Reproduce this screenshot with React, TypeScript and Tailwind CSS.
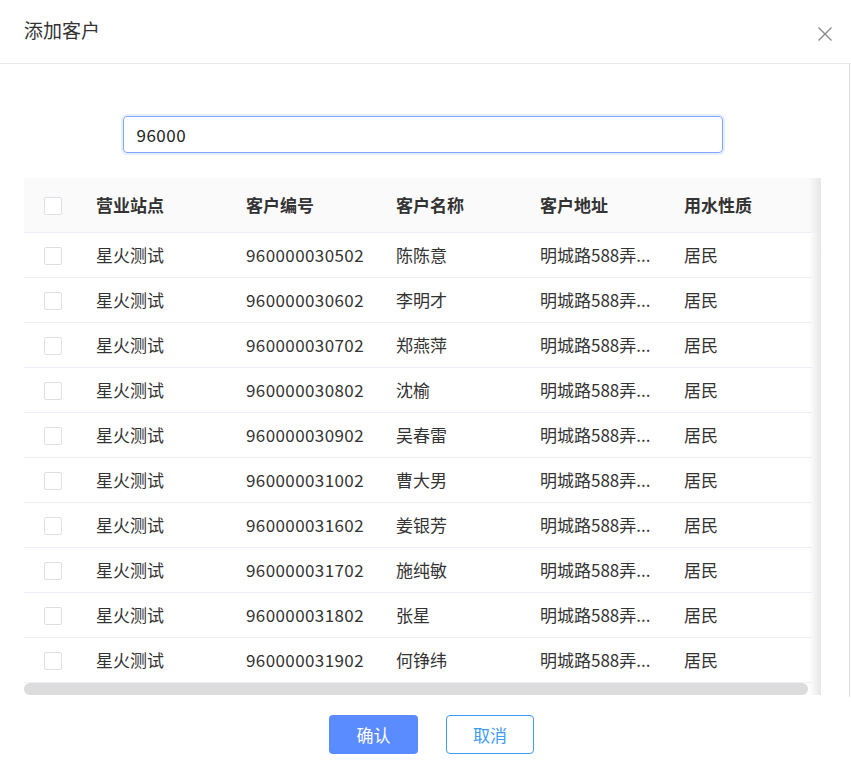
import React from 'react';

interface Customer {
    site: string;
    code: string;
    name: string;
    address: string;
    waterType: string;
}

const customers: Customer[] = [
    { site: '星火测试', code: '960000030502', name: '陈陈意', address: '明城路588弄...', waterType: '居民' },
    { site: '星火测试', code: '960000030602', name: '李明才', address: '明城路588弄...', waterType: '居民' },
    { site: '星火测试', code: '960000030702', name: '郑燕萍', address: '明城路588弄...', waterType: '居民' },
    { site: '星火测试', code: '960000030802', name: '沈榆', address: '明城路588弄...', waterType: '居民' },
    { site: '星火测试', code: '960000030902', name: '吴春雷', address: '明城路588弄...', waterType: '居民' },
    { site: '星火测试', code: '960000031002', name: '曹大男', address: '明城路588弄...', waterType: '居民' },
    { site: '星火测试', code: '960000031602', name: '姜银芳', address: '明城路588弄...', waterType: '居民' },
    { site: '星火测试', code: '960000031702', name: '施纯敏', address: '明城路588弄...', waterType: '居民' },
    { site: '星火测试', code: '960000031802', name: '张星', address: '明城路588弄...', waterType: '居民' },
    { site: '星火测试', code: '960000031902', name: '何铮纬', address: '明城路588弄...', waterType: '居民' },
];

const Checkbox = () => (
    <span className="block w-[18px] h-[18px] rounded-[2px] border border-[#dcdfe6] bg-white" />
);

const cols = 'grid grid-cols-[72px_150px_150px_144px_144px_1fr] items-center';

const App: React.FC = () => {
    return (
        <div
            className="w-[851px] h-[764px] bg-white text-[#333] overflow-hidden"
            style={{ fontFamily: '"Noto Sans CJK SC", "Noto Sans", sans-serif' }}
        >
            {/* header */}
            <div className="h-[64px] border-b border-[#ebebeb] flex items-center justify-between pl-[24px] pr-[18px]">
                <span className="text-[19px] text-[#333] -mt-[2px]">添加客户</span>
                <button className="text-[#888] mt-[4px]">
                    <svg width="16" height="16" viewBox="0 0 16 16" fill="none" stroke="currentColor" strokeWidth="1.3">
                        <path d="M1.5 1.5 L14.5 14.5 M14.5 1.5 L1.5 14.5" />
                    </svg>
                </button>
            </div>

            {/* body */}
            <div className="w-[850px] h-[633px] border-r border-[#dcdcdc] pt-[52px]">
                <div className="flex justify-center pr-[4px]">
                    <input
                        defaultValue="96000"
                        className="w-[600px] h-[37px] rounded-[4px] border border-[#82a6ff] px-[13px] text-[17px] tracking-[0.5px] text-[#222] outline-none shadow-[0_0_0_2px_rgba(120,160,255,0.18)]"
                    />
                </div>

                {/* table */}
                <div className="relative ml-[24px] mt-[25px] w-[797px]">
                    <div className="w-[788px]">
                        <div className={`${cols} h-[55px] bg-[#fafafa] border-b border-[#ebeef5] text-[17px] font-bold text-[#333]`}>
                            <div className="pl-[20px] pt-[1px]"><Checkbox /></div>
                            <div>营业站点</div>
                            <div>客户编号</div>
                            <div>客户名称</div>
                            <div>客户地址</div>
                            <div>用水性质</div>
                        </div>
                        {customers.map((c) => (
                            <div key={c.code} className={`${cols} h-[45px] border-b border-[#ebeef5] text-[17px] text-[#333]`}>
                                <div className="pl-[20px] pt-[1px]"><Checkbox /></div>
                                <div>{c.site}</div>
                                <div className="tracking-[0.4px]">{c.code}</div>
                                <div>{c.name}</div>
                                <div>{c.address}</div>
                                <div>{c.waterType}</div>
                            </div>
                        ))}
                    </div>
                    {/* horizontal scrollbar */}
                    <div className="h-[12px] w-[784px] rounded-full bg-[#dcdcdc]" />
                    {/* header fill behind shadow */}
                    <div className="absolute right-0 top-0 h-[55px] w-[10px] bg-[#fafafa]" />
                    {/* right fixed-column shadow */}
                    <div className="absolute right-0 top-0 bottom-0 w-[12px] bg-gradient-to-r from-white/0 to-[#e6e6e6]" />
                </div>
            </div>

            {/* footer */}
            <div className="flex justify-center gap-[28px] pt-[18px] pl-[12px]">
                <button className="w-[89px] h-[39px] rounded-[4px] bg-[#5b8cff] text-white text-[17px]">确认</button>
                <button className="w-[88px] h-[39px] rounded-[4px] border border-[#3d9bf5] text-[#3d9bf5] text-[17px] bg-white">取消</button>
            </div>
        </div>
    );
};

export default App;
